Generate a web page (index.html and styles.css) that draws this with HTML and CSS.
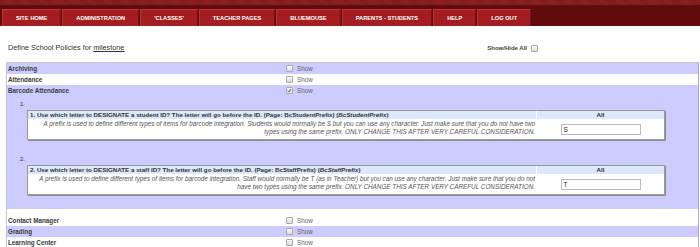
FILE: index.html
```html
<!DOCTYPE html>
<html>
<head>
<meta charset="utf-8">
<link rel="stylesheet" href="styles.css">
</head>
<body>
<div class="nav">
  <div class="nav-top"></div>
  <div class="tabs">
    <span class="tab">SITE HOME</span>
    <span class="tab">ADMINISTRATION</span>
    <span class="tab">'CLASSES'</span>
    <span class="tab">TEACHER PAGES</span>
    <span class="tab">BLUEMOUSE</span>
    <span class="tab">PARENTS - STUDENTS</span>
    <span class="tab">HELP</span>
    <span class="tab">LOG OUT</span>
  </div>
</div>
<div class="head">
  <div class="title">Define School Policies for <span class="link">milestone</span></div>
  <div class="showall">Show/Hide All <span class="cb"></span></div>
</div>
<div class="table">
  <div class="row alt"><div class="label">Archiving</div><div class="show"><span class="cb"></span>Show</div></div>
  <div class="row"><div class="label">Attendance</div><div class="show"><span class="cb"></span>Show</div></div>
  <div class="row alt"><div class="label">Barcode Attendance</div><div class="show"><span class="cb checked"><svg viewBox="0 0 8 8" width="7" height="7"><path d="M1.5 4.2 L3.2 6 L6.6 1.6" fill="none" stroke="#222" stroke-width="1.4"/></svg></span>Show</div></div>
  <div class="sub alt">
    <div class="item">
      <div class="num">1.</div>
      <div class="box">
        <div class="bhead"><div class="q">1. Use which letter to DESIGNATE a student ID? The letter will go before the ID. (Page: BcStudentPrefix) (<i>BcStudentPrefix</i>)</div><div class="all">All</div></div>
        <div class="bbody"><div class="desc">A prefix is used to define different types of items for barcode integration. Students would normally be S but you can use any character. Just make sure that you do not have two<br>types using the same prefix. ONLY CHANGE THIS AFTER VERY CAREFUL CONSIDERATION.</div><div class="val"><span class="input">S</span></div></div>
      </div>
    </div>
    <div class="item">
      <div class="num">2.</div>
      <div class="box">
        <div class="bhead"><div class="q">2. Use which letter to DESIGNATE a staff ID? The letter will go before the ID. (Page: BcStaffPrefix) (<i>BcStaffPrefix</i>)</div><div class="all">All</div></div>
        <div class="bbody"><div class="desc">A prefix is used to define different types of items for barcode integration. Staff would normally be T (as in Teacher) but you can use any character. Just make sure that you do not<br>have two types using the same prefix. ONLY CHANGE THIS AFTER VERY CAREFUL CONSIDERATION.</div><div class="val"><span class="input">T</span></div></div>
      </div>
    </div>
  </div>
  <div class="row tall"><div class="label">Contact Manager</div><div class="show"><span class="cb"></span>Show</div></div>
  <div class="row alt"><div class="label">Grading</div><div class="show"><span class="cb"></span>Show</div></div>
  <div class="row"><div class="label">Learning Center</div><div class="show"><span class="cb"></span>Show</div></div>
</div>
</body>
</html>
```
FILE: styles.css
```css
* { box-sizing: border-box; }
html, body { margin: 0; padding: 0; background: #fff; }
body { font-family: "Liberation Sans", Arial, sans-serif; color: #333; overflow: hidden; height: 247px; }

.nav { height: 26px; background: #620b0c; display: flex; flex-direction: column; }
.nav-top { height: 5px; background: repeating-linear-gradient(45deg, #7e1a1a 0 1px, #8c2222 1px 2px); flex: none; }
.tabs { display: flex; gap: 1px; padding-left: 2px; margin-top: 4px; height: 17px; }
.tab { background: #a31d22; border-top: 1px solid #b8383c; border-left: 1px solid #b3363a; border-right: 1px solid #7a1014; color: #fff; font-weight: bold; font-size: 5.7px; line-height: 16px; padding: 0 13px; white-space: nowrap; }

.head { display: flex; justify-content: space-between; align-items: center; padding: 17px 0 0 8px; height: 27px; }
.title { font-size: 7.3px; line-height: 10px; color: #333; }
.link { text-decoration: underline; }
.showall { font-size: 6px; font-weight: bold; color: #444; display: flex; align-items: center; gap: 4px; margin-right: 162px; }

.cb { display: inline-flex; align-items: center; justify-content: center; width: 7px; height: 7px; border: 1px solid #a9a9a9; border-radius: 1px; background: linear-gradient(#fafafa, #dcdcdc); flex: none; }
.cb svg { display: block; width: 5px; height: 5px; }

.table { margin: 9px 1px 0 6px; border-top: 1px solid #c8c8d8; border-left: 1px solid #c0c0dd; border-right: 1px solid #a8a8c8; }
.row { display: grid; grid-template-columns: 279px 1fr; height: 11px; align-items: center; }
.row.tall { height: 17px; padding-top: 6px; }
.alt { background: #ccccff; }
.label { font-size: 6.3px; font-weight: bold; color: #3a3a3a; padding-left: 1px; white-space: nowrap; }
.show { display: flex; align-items: center; gap: 4px; font-size: 6.3px; color: #666; }

.sub { padding: 3px 0 14px 0; }
.item + .item { margin-top: 14px; }
.num { height: 10px; line-height: 10px; font-size: 6px; padding-left: 13px; color: #333; }
.box { margin: 1px 0 0 20px; width: 638px; border: 1px solid #999; box-shadow: 1px 1px 0 #8d8d8d; background: #fff; }
.bhead { display: grid; grid-template-columns: 509px 1fr; background: #dce9fb; height: 8px; line-height: 8px; font-size: 6.2px; font-weight: bold; color: #333; }
.q { padding-left: 2px; white-space: nowrap; overflow: hidden; border-right: 1px solid #fff; }
.all { text-align: center; }
.bbody { display: grid; grid-template-columns: 509px 1fr; height: 20px; }
.desc { font-size: 6.35px; font-style: italic; color: #555; text-align: right; line-height: 8px; padding: 1px 2px 0 2px; white-space: nowrap; overflow: hidden; }
.val { display: flex; align-items: center; justify-content: center; }
.input { width: 80px; height: 11px; border: 1px solid #bbb; font-size: 6.5px; line-height: 9px; padding-left: 2px; color: #222; background: #fff; }
```
